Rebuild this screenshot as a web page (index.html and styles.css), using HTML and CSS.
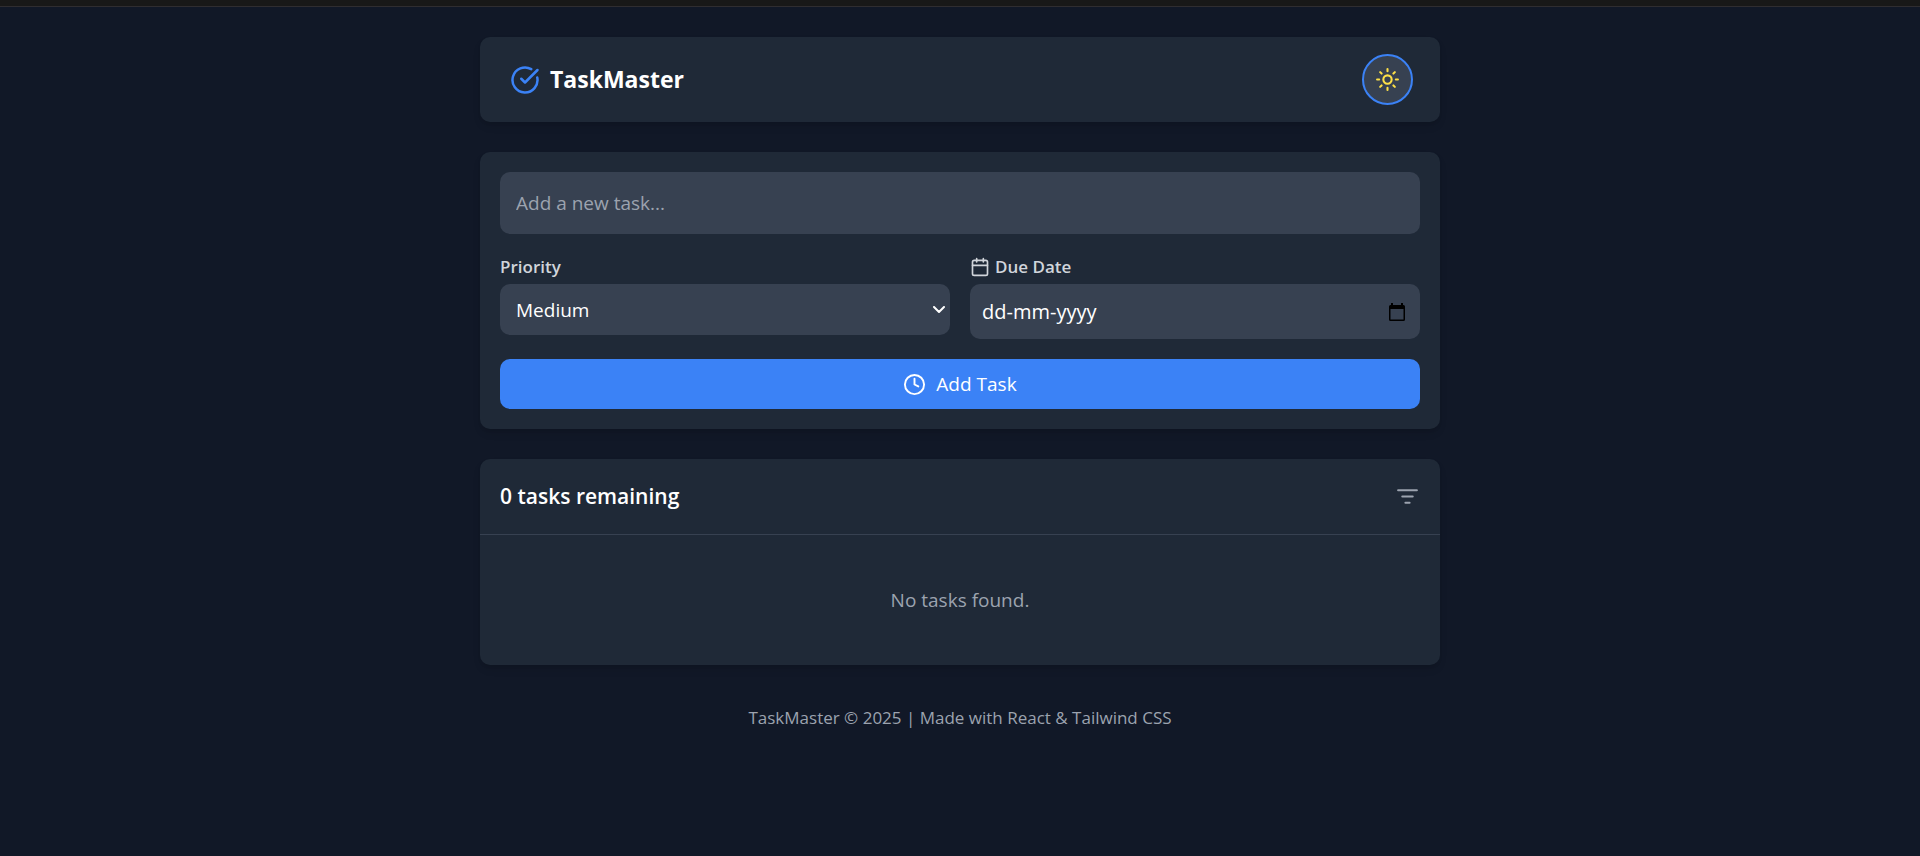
FILE: index.html
```html
<!DOCTYPE html>
<html lang="en">
<head>
<meta charset="utf-8">
<meta name="viewport" content="width=device-width, initial-scale=1">
<title>TaskMaster</title>
<link rel="stylesheet" href="styles.css">
</head>
<body>
<div class="topbar"></div>
<div class="container">
  <header class="card header">
    <div class="brand">
      <svg class="icon brand-icon" viewBox="0 0 24 24" aria-hidden="true"><path d="M21.801 10A10 10 0 1 1 17 3.335"/><path d="m9 11 3 3L22 4"/></svg>
      <h1 class="brand-name">TaskMaster</h1>
    </div>
    <button class="theme-toggle" type="button" aria-label="Toggle theme">
      <svg class="icon icon-md" viewBox="0 0 24 24" aria-hidden="true"><circle cx="12" cy="12" r="4"/><path d="M12 2v2M12 20v2M4.93 4.93l1.41 1.41M17.66 17.66l1.41 1.41M2 12h2M20 12h2M6.34 17.66l-1.41 1.41M19.07 4.93l-1.41 1.41"/></svg>
    </button>
  </header>

  <main class="main">
    <form class="card form">
      <input class="field task-input" type="text" placeholder="Add a new task..." aria-label="Task">
      <div class="form-grid">
        <div class="form-group">
          <label class="label" for="priority">Priority</label>
          <div class="select-wrap">
            <select class="field select" id="priority">
              <option>Low</option>
              <option selected>Medium</option>
              <option>High</option>
            </select>
            <svg class="icon select-arrow" viewBox="0 0 12 8" aria-hidden="true"><path d="m1 1 5 5 5-5"/></svg>
          </div>
        </div>
        <div class="form-group">
          <label class="label" for="due">
            <svg class="icon icon-sm" viewBox="0 0 24 24" aria-hidden="true"><path d="M8 2v4M16 2v4M3 10h18"/><rect x="3" y="4" width="18" height="18" rx="2"/></svg>
            Due Date
          </label>
          <div class="field date-field">
            <input class="date-input" id="due" type="text" placeholder="dd-mm-yyyy">
            <svg class="date-icon" viewBox="0 0 16 18" aria-hidden="true"><path fill-rule="evenodd" d="M2 0h2v2h8V0h2v2h.5A1.500 1.500 0 0 1 16 3.500v13a1.500 1.500 0 0 1-1.500 1.500h-13A1.500 1.500 0 0 1 0 16.500v-13A1.500 1.500 0 0 1 1.500 2H2zM1.500 6v10.500h13V6z"/></svg>
          </div>
        </div>
      </div>
      <button class="submit" type="submit">
        <svg class="icon icon-clock" viewBox="0 0 24 24" aria-hidden="true"><circle cx="12" cy="12" r="10"/><path d="M12 6v6l4 2"/></svg>
        Add Task
      </button>
    </form>

    <section class="card">
      <div class="list-header">
        <h2 class="list-title">0 tasks remaining</h2>
        <button class="filter" type="button" aria-label="Filter tasks">
          <svg class="icon icon-md" viewBox="0 0 24 24" aria-hidden="true"><path d="M3 6h18M7 12h10M10 18h4"/></svg>
        </button>
      </div>
      <p class="empty">No tasks found.</p>
    </section>
  </main>

  <footer class="footer">TaskMaster © 2025 | Made with React &amp; Tailwind CSS</footer>
</div>
</body>
</html>
```
FILE: styles.css
```css
*, *::before, *::after { box-sizing: border-box; }

body {
  margin: 0;
  min-height: 100vh;
  background: #111827;
  color: #fff;
  font-family: "Segoe UI", "Open Sans", "Noto Sans", sans-serif;
  font-size: 19px;
  line-height: 30px;
}

h1, h2, p { margin: 0; }
button, input, select { font: inherit; color: inherit; }
button { cursor: pointer; }

.topbar {
  height: 7px;
  background: #181818;
  border-bottom: 1px solid #2f2d30;
}

.container {
  max-width: 960px;
  margin: 0 auto;
  padding-top: 30px;
}

.card {
  background: #1f2937;
  border-radius: 10px;
  box-shadow: 0 5px 8px -1px rgba(0, 0, 0, 0.1), 0 2px 5px -2px rgba(0, 0, 0, 0.1);
}

.icon {
  display: block;
  flex: none;
  fill: none;
  stroke: currentColor;
  stroke-width: 2;
  stroke-linecap: round;
  stroke-linejoin: round;
}
.icon-sm { width: 20px; height: 20px; }
.icon-md { width: 25px; height: 25px; }
.icon-clock { width: 23px; height: 23px; }

.header {
  display: flex;
  align-items: center;
  justify-content: space-between;
  min-height: 85px;
  padding: 17px 27px 17px 30px;
}
.brand { display: flex; align-items: center; gap: 10px; }
.brand-icon { width: 30px; height: 30px; color: #3b82f6; }
.brand-name { font-size: 23px; font-weight: 700; line-height: 35px; }

.theme-toggle {
  display: grid;
  place-items: center;
  width: 51px;
  height: 51px;
  padding: 0;
  border: 2px solid #3b82f6;
  border-radius: 50%;
  background: #374151;
  color: #fde047;
}

.main { display: grid; gap: 30px; margin-top: 30px; }

.form { display: grid; gap: 20px; padding: 20px; }

.field {
  width: 100%;
  border: 0;
  border-radius: 10px;
  outline: 0;
  background: #374151;
}
.task-input { height: 62px; padding: 16px; }
.task-input::placeholder { color: #9ca3af; opacity: 1; }

.form-grid { display: grid; grid-template-columns: 1fr 1fr; gap: 20px; }
.label {
  display: flex;
  align-items: center;
  gap: 5px;
  margin-bottom: 5px;
  color: #d1d5db;
  font-size: 17px;
  font-weight: 600;
  line-height: 25px;
}

.select-wrap { display: grid; align-items: center; }
.select-wrap > * { grid-area: 1 / 1; }
.select { height: 51px; padding: 10px 16px; appearance: none; }
.select-arrow {
  justify-self: end;
  width: 12px;
  height: 8px;
  margin-right: 5px;
  pointer-events: none;
}

.date-field {
  display: flex;
  align-items: center;
  height: 55px;
  padding: 0 15px 0 12px;
}
.date-input {
  flex: 1;
  min-width: 0;
  padding: 0;
  border: 0;
  outline: 0;
  background: transparent;
  font-size: 20px;
}
.date-input::placeholder { color: #fff; opacity: 1; }
.date-icon { width: 16px; height: 18px; fill: #000; }

.submit {
  display: flex;
  align-items: center;
  justify-content: center;
  gap: 10px;
  height: 50px;
  border: 0;
  border-radius: 10px;
  background: #3b82f6;
}

.list-header {
  display: flex;
  align-items: center;
  justify-content: space-between;
  padding: 20px;
  border-bottom: 1px solid #374151;
}
.list-title { font-size: 21px; font-weight: 600; line-height: 35px; }
.filter {
  padding: 0;
  border: 0;
  background: none;
  color: #9ca3af;
}

.empty { padding: 50px 20px; color: #9ca3af; text-align: center; }

.footer {
  padding: 40px 0;
  color: #9ca3af;
  font-size: 17px;
  line-height: 25px;
  text-align: center;
}
```
